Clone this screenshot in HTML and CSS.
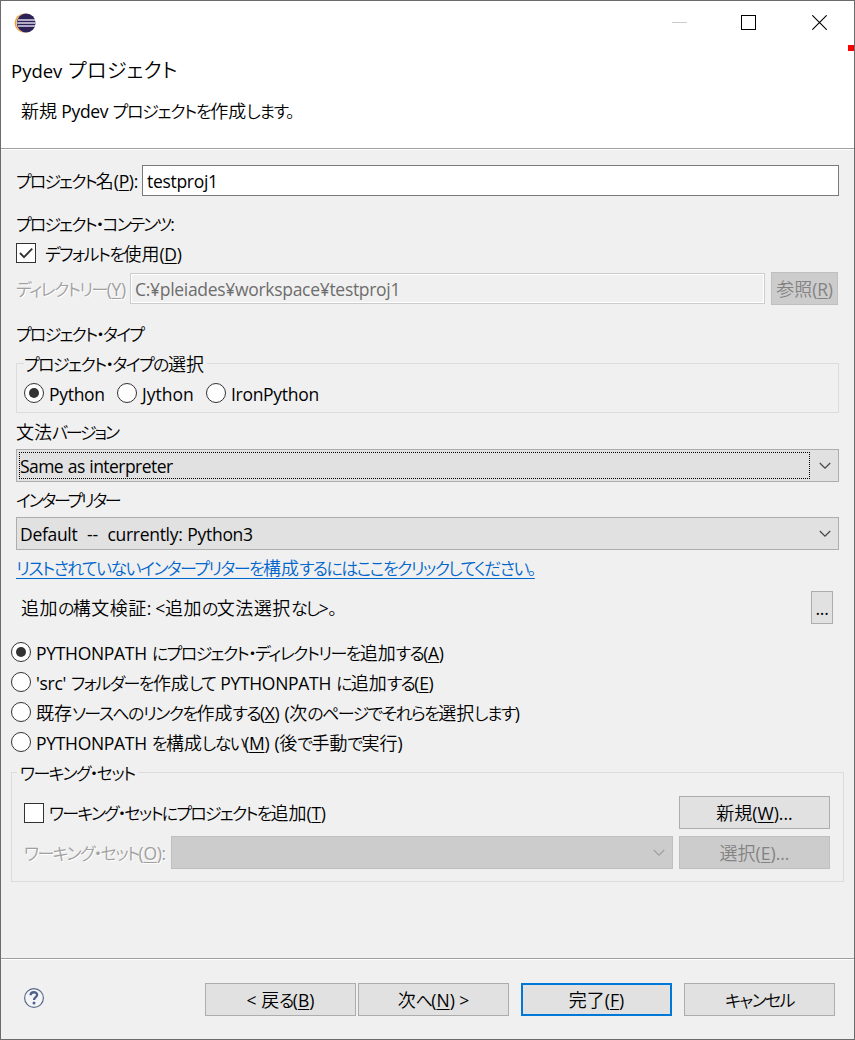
FILE: index.html
```html
<!DOCTYPE html>
<html lang="ja">
<head>
<meta charset="utf-8">
<title>Pydev プロジェクト</title>
<link rel="stylesheet" href="styles.css">
</head>
<body>
<div class="window">
  <header class="titlebar">
    <svg class="logo" viewBox="0 0 22 20" width="22" height="20">
      <circle cx="10.2" cy="10" r="9.6" fill="#f59b2c"/>
      <circle cx="11.6" cy="10" r="9.6" fill="#e9dccb"/>
      <circle cx="12.2" cy="10" r="9.4" fill="#2c2255"/>
      <path d="M4 6.9h17M3.2 10h18.4M4 13.1h17" stroke="#dcd8ea" stroke-width="1.5"/>
    </svg>
    <div class="controls">
      <svg width="15" height="15"><path d="M0 7.5h15" stroke="#ccc"/></svg>
      <svg width="15" height="15"><rect x=".5" y=".5" width="14" height="14" fill="none" stroke="#000"/></svg>
      <svg class="close" width="15" height="15"><path d="M.3.3l14.4 14.4M14.7.3L.3 14.7" stroke="#000" stroke-width="1.1"/></svg>
    </div>
    <span class="marker"></span>
  </header>
  <section class="banner">
    <h1><span class="t">Pydev <span class="k">プロジェクト</span></span></h1>
    <p><span class="t"><span class="j">新規</span> Pydev <span class="k">プロジェクトを</span><span class="j">作成</span><span class="k">します。</span></span></p>
  </section>
  <main class="content">
    <div class="row name-row">
      <label><span class="t"><span class="k tight">プロジェクト</span><span class="j">名</span>(<u>P</u>):</span></label>
      <div class="field"><span class="t">testproj1</span></div>
    </div>
    <div class="row contents-row"><span class="t"><span class="k tight">プロジェクト・コンテンツ</span>:</span></div>
    <div class="row default-row">
      <span class="check"><svg width="18" height="18"><path d="M3 9l4 4.2L15.2 4.6" fill="none" stroke="#333" stroke-width="1.9"/></svg></span>
      <span class="t"><span class="k">デフォルトを</span><span class="j">使用</span>(<u>D</u>)</span>
    </div>
    <div class="row dir-row">
      <label class="dim"><span class="t"><span class="k">ディレクトリー</span>(<u>Y</u>)</span></label>
      <div class="field off"><span class="t">C:¥pleiades¥workspace¥testproj1</span></div>
      <div class="btn off browse"><span class="t"><span class="j">参照</span>(<u>R</u>)</span></div>
    </div>
    <div class="row type-row"><span class="t"><span class="k">プロジェクト・タイプ</span></span></div>
    <div class="group type-group">
      <div class="legend"><span class="t"><span class="k">プロジェクト・タイプの</span><span class="j">選択</span></span></div>
      <div class="options">
        <span class="radio on"></span><span class="t o1">Python</span>
        <span class="radio"></span><span class="t o2">Jython</span>
        <span class="radio"></span><span class="t">IronPython</span>
      </div>
    </div>
    <div class="row grammar-row"><span class="t"><span class="j">文法</span><span class="k">バージョン</span></span></div>
    <div class="combo focus">
      <div class="value"><span class="t">Same as interpreter</span></div>
      <svg class="arrow" width="12" height="8"><path d="M.8 1l5.2 5.2L11.2 1" fill="none" stroke="#444" stroke-width="1.2"/></svg>
    </div>
    <div class="row interp-row"><span class="t"><span class="k">インタープリター</span></span></div>
    <div class="combo">
      <div class="value"><span class="t">Default&nbsp; --&nbsp; currently: Python3</span></div>
      <svg class="arrow" width="12" height="8"><path d="M.8 1l5.2 5.2L11.2 1" fill="none" stroke="#444" stroke-width="1.2"/></svg>
    </div>
    <div class="row link-row"><a class="t"><span class="k">リストされていないインタープリターを</span><span class="j">構成</span><span class="k">するにはここをクリックしてください。</span></a></div>
    <div class="row syntax-row">
      <span class="t"><span class="j">追加</span><span class="k">の</span><span class="j">構文検証</span>: &lt;<span class="j">追加</span><span class="k">の</span><span class="j">文法選択</span><span class="k">なし</span>&gt;<span class="k">。</span></span>
      <div class="btn more">...</div>
    </div>
    <div class="paths">
      <div class="row"><span class="radio on"></span><span class="t">PYTHONPATH <span class="k">にプロジェクト・ディレクトリーを</span><span class="j">追加</span><span class="k">する</span>(<u>A</u>)</span></div>
      <div class="row"><span class="radio"></span><span class="t">'src' <span class="k">フォルダーを</span><span class="j">作成</span><span class="k">して</span> PYTHONPATH <span class="k">に</span><span class="j">追加</span><span class="k">する</span>(<u>E</u>)</span></div>
      <div class="row"><span class="radio"></span><span class="t"><span class="j">既存</span><span class="k">ソースへのリンクを</span><span class="j">作成</span><span class="k">する</span>(<u>X</u>) (<span class="j">次</span><span class="k">のページでそれらを</span><span class="j">選択</span><span class="k">します</span>)</span></div>
      <div class="row"><span class="radio"></span><span class="t">PYTHONPATH <span class="k">を</span><span class="j">構成</span><span class="k">しない</span>(<u>M</u>) (<span class="j">後</span><span class="k">で</span><span class="j">手動</span><span class="k">で</span><span class="j">実行</span>)</span></div>
    </div>
    <div class="group set-group">
      <div class="legend"><span class="t"><span class="k">ワーキング・セット</span></span></div>
      <div class="row add-row">
        <span class="check"></span>
        <span class="t"><span class="k">ワーキング・セットにプロジェクトを</span><span class="j">追加</span>(<u>T</u>)</span>
        <div class="btn wide"><span class="t"><span class="j">新規</span>(<u>W</u>)...</span></div>
      </div>
      <div class="row set-row">
        <label class="dim"><span class="t"><span class="k">ワーキング・セット</span>(<u>O</u>):</span></label>
        <div class="combo off"><div class="value"></div>
          <svg class="arrow" width="12" height="8"><path d="M.8 1l5.2 5.2L11.2 1" fill="none" stroke="#a0a0a0" stroke-width="1.2"/></svg>
        </div>
        <div class="btn wide off"><span class="t"><span class="j">選択</span>(<u>E</u>)...</span></div>
      </div>
    </div>
  </main>
  <footer class="footer">
    <svg class="help" width="22" height="22" viewBox="0 0 22 22">
      <circle cx="11" cy="11" r="9.4" fill="#f4f5f7" stroke="#5b6b8c" stroke-width="1.2"/>
      <path d="M7.6 8.3C7.6 4.2 14.3 4.4 14.1 8C14 10.2 11 10 11 13" fill="none" stroke="#50628a" stroke-width="2.3"/>
      <circle cx="11" cy="16" r="1.5" fill="#50628a"/>
    </svg>
    <div class="btn back"><span class="t">&lt; <span class="j">戻</span><span class="k">る</span>(<u>B</u>)</span></div>
    <div class="btn next"><span class="t"><span class="j">次</span><span class="k">へ</span>(<u>N</u>) &gt;</span></div>
    <div class="btn primary"><span class="t"><span class="j">完了</span>(<u>F</u>)</span></div>
    <div class="btn"><span class="t"><span class="k">キャンセル</span></span></div>
  </footer>
</div>
</body>
</html>
```
FILE: styles.css
```css
* { box-sizing: border-box; }
body {
  margin: 0;
  font: 17.5px/24px "Open Sans", "Noto Sans CJK JP", sans-serif;
  letter-spacing: -0.3px;
  color: #000;
}
.window {
  display: flex;
  flex-direction: column;
  width: 855px;
  height: 1040px;
  background: #f0f0f0;
  border: 1px solid #6b6b6b;
  overflow: hidden;
}
.t { white-space: nowrap; display: inline-block; }
.k, .j { font-family: "Noto Sans CJK JP", sans-serif; font-weight: 350; }
.k { font-size: 17px; font-feature-settings: "palt"; letter-spacing: -1.6px; }
.k.tight { letter-spacing: -1.9px; }
.j { font-size: 18px; letter-spacing: 0; }
u { text-underline-offset: 2px; text-decoration-thickness: 1px; }
.titlebar {
  position: relative;
  display: flex;
  justify-content: space-between;
  height: 45px;
  padding: 12px 27px 0 13px;
  background: #fff;
}
.controls { display: flex; gap: 54px; padding-top: 2px; }
.close { margin-left: 2px; }
.marker { position: absolute; right: 0; top: 44px; width: 6px; height: 6px; background: #f00; }
.banner { height: 102px; padding: 12px 0 0 10px; background: #fff; }
.banner h1 { margin: 0; font-size: 18.5px; font-weight: 400; line-height: 24px; letter-spacing: 0; }
.banner h1 .k { font-size: 20px; letter-spacing: 0.4px; }
.banner h1 .t { word-spacing: 1px; }
.banner p { margin: 15px 0 0 10px; }
.banner p .k { letter-spacing: -1.3px; }
.content {
  height: 810px;
  border-top: 1px solid #a0a0a0;
  box-shadow: inset 0 1px #fff;
  padding: 16px 15px 0;
}
.row { display: flex; align-items: center; }
.field { flex: 1; height: 31px; padding: 3px 4px; background: #fff; border: 1px solid #7a7a7a; }
.field.off { background: #f0f0f0; border-color: #ccc; box-shadow: inset 0 0 0 1px #fff; color: #6d6d6d; }
.dim { color: #a0a0a0; text-shadow: 1px 1px #fff; }
.name-row { height: 31px; }
.name-row label { width: 126px; }
.contents-row { height: 24px; margin-top: 16px; }
.default-row { height: 30px; gap: 9px; padding-top: 4px; }
.dir-row { height: 33px; margin: 6px 0 0; }
.dir-row label { width: 114px; }
.browse { width: 67px; margin: 0 1px 0 6px; }
.type-row { height: 24px; margin-top: 17px; }
.type-row .k { letter-spacing: -1.8px; }
.check { width: 20px; height: 20px; background: #fff; border: 1px solid #333; }
.check svg { display: block; }
.radio { flex: none; display: grid; place-items: center; width: 20px; height: 20px; border: 1px solid #333; border-radius: 50%; background: #fff; }
.radio.on::after { content: ""; width: 10px; height: 10px; border-radius: 50%; background: #333; }
.group { border: 1px solid #dcdcdc; }
.legend { width: max-content; height: 24px; margin-top: -13px; background: #f0f0f0; }
.type-group { height: 50px; margin-top: 17px; padding-left: 7px; }
.type-group .legend { padding-right: 3px; }
.options { display: flex; align-items: center; height: 24px; margin-top: 6px; gap: 5px; }
.options .t { padding-top: 2px; }
.o1 { width: 63px; }
.o2 { width: 59px; letter-spacing: 0; }
.grammar-row { height: 24px; margin: 7px 0 5px; padding-bottom: 2px; }
.grammar-row .k { letter-spacing: -2.2px; }
.interp-row { height: 24px; margin: 6px 0 5px; }
.interp-row .k { letter-spacing: -2.3px; }
.combo { display: flex; align-items: center; height: 33px; padding: 2px 7px 2px 2px; background: #e1e1e1; border: 1px solid #adadad; }
.combo .value { flex: 1; height: 27px; padding: 2px 1px; margin-right: 9px; word-spacing: 0.6px; }
.combo.focus .value { border: 1px dotted #000; padding: 1px 0; letter-spacing: -0.55px; }
.combo.off { flex: 1; background: #ccc; border-color: #bfbfbf; }
.link-row { height: 24px; margin: 5px 0 1px; }
.link-row a { color: #0066cc; text-decoration: underline 1px; text-underline-offset: 3px; }
.syntax-row { justify-content: space-between; height: 33px; margin-top: 12px; padding: 0 6px 0 5px; }
.syntax-row .j { letter-spacing: 0.5px; }
.btn { display: flex; align-items: center; justify-content: center; height: 33px; background: #e1e1e1; border: 1px solid #adadad; }
.btn.off { background: #ccc; border-color: #bfbfbf; color: #838383; }
.more { width: 22px; }
.paths { margin: 13px 0 0 -5px; }
.paths .row { height: 30px; gap: 5px; word-spacing: 0.8px; }
.set-group { height: 110px; margin: 15px -5px 0; padding: 0 13px 0 12px; }
.set-group .legend { margin: -12px 0 0 -7px; padding: 0 3px; }
.add-row { height: 33px; margin-top: 11px; gap: 5px; }
.add-row .k { letter-spacing: -1.8px; }
.wide { width: 151px; margin-left: auto; }
.wide, .footer { letter-spacing: 0; }
.set-row { height: 33px; margin-top: 7px; }
.set-row label { width: 147px; }
.set-row .wide { margin-left: 6px; }
.footer {
  display: flex;
  align-items: center;
  flex: 1;
  border-top: 1px solid #a0a0a0;
  box-shadow: inset 0 1px #fff;
  padding: 1px 19px 0 22px;
}
.footer .btn { width: 151px; }
.help { margin: 0 auto 4px 0; }
.back { margin-right: 2px; }
.next { margin-right: 12px; }
.btn.primary { border: 2px solid #0078d7; margin-right: 12px; }
```
